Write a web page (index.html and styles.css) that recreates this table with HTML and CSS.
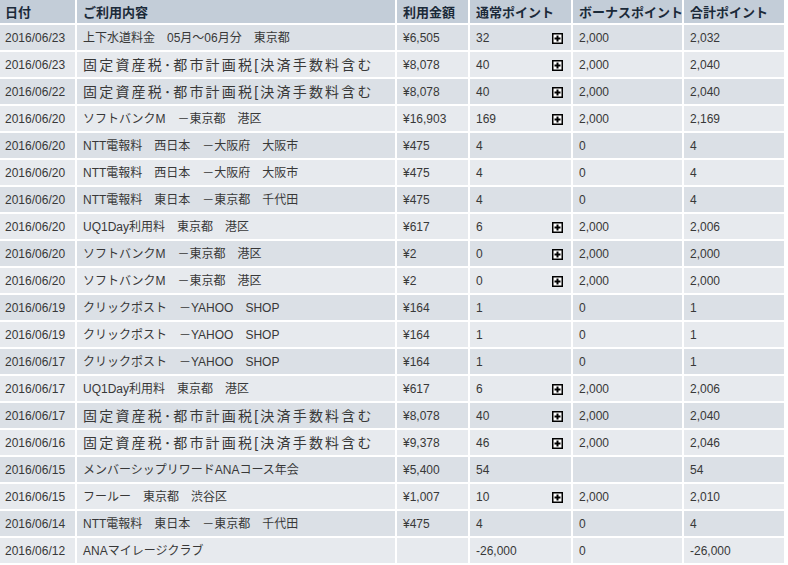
FILE: index.html
```html
<!DOCTYPE html>
<html lang="ja">
<head>
<meta charset="utf-8">
<link rel="stylesheet" href="styles.css">
</head>
<body>
<table class="pts">
<colgroup>
<col class="c-date"><col class="c-desc"><col class="c-amt"><col class="c-norm"><col class="c-bonus"><col class="c-total">
</colgroup>
<thead>
<tr><th class="first">日付</th><th>ご利用内容</th><th>利用金額</th><th>通常ポイント</th><th>ボーナスポイント</th><th>合計ポイント</th></tr>
</thead>
<tbody id="rows">
<tr><td class="first">2016/06/23</td><td>上下水道料金　05月～06月分　東京都</td><td>¥6,505</td><td><div class="np"><span>32</span><svg class="plus" viewBox="0 0 11 11" width="11" height="11"><rect x="0.75" y="0.75" width="9.5" height="9.5" fill="#fff" stroke="#000" stroke-width="1.5"/><rect x="2.5" y="4.5" width="6" height="2" fill="#000"/><rect x="4.5" y="2.5" width="2" height="6" fill="#000"/></svg></div></td><td>2,000</td><td>2,032</td></tr>
<tr><td class="first">2016/06/23</td><td class="wide">固定資産税･都市計画税[決済手数料含む</td><td>¥8,078</td><td><div class="np"><span>40</span><svg class="plus" viewBox="0 0 11 11" width="11" height="11"><rect x="0.75" y="0.75" width="9.5" height="9.5" fill="#fff" stroke="#000" stroke-width="1.5"/><rect x="2.5" y="4.5" width="6" height="2" fill="#000"/><rect x="4.5" y="2.5" width="2" height="6" fill="#000"/></svg></div></td><td>2,000</td><td>2,040</td></tr>
<tr><td class="first">2016/06/22</td><td class="wide">固定資産税･都市計画税[決済手数料含む</td><td>¥8,078</td><td><div class="np"><span>40</span><svg class="plus" viewBox="0 0 11 11" width="11" height="11"><rect x="0.75" y="0.75" width="9.5" height="9.5" fill="#fff" stroke="#000" stroke-width="1.5"/><rect x="2.5" y="4.5" width="6" height="2" fill="#000"/><rect x="4.5" y="2.5" width="2" height="6" fill="#000"/></svg></div></td><td>2,000</td><td>2,040</td></tr>
<tr><td class="first">2016/06/20</td><td>ソフトバンクM　－東京都　港区</td><td>¥16,903</td><td><div class="np"><span>169</span><svg class="plus" viewBox="0 0 11 11" width="11" height="11"><rect x="0.75" y="0.75" width="9.5" height="9.5" fill="#fff" stroke="#000" stroke-width="1.5"/><rect x="2.5" y="4.5" width="6" height="2" fill="#000"/><rect x="4.5" y="2.5" width="2" height="6" fill="#000"/></svg></div></td><td>2,000</td><td>2,169</td></tr>
<tr><td class="first">2016/06/20</td><td>NTT電報料　西日本　－大阪府　大阪市</td><td>¥475</td><td><div class="np"><span>4</span></div></td><td>0</td><td>4</td></tr>
<tr><td class="first">2016/06/20</td><td>NTT電報料　西日本　－大阪府　大阪市</td><td>¥475</td><td><div class="np"><span>4</span></div></td><td>0</td><td>4</td></tr>
<tr><td class="first">2016/06/20</td><td>NTT電報料　東日本　－東京都　千代田</td><td>¥475</td><td><div class="np"><span>4</span></div></td><td>0</td><td>4</td></tr>
<tr><td class="first">2016/06/20</td><td>UQ1Day利用料　東京都　港区</td><td>¥617</td><td><div class="np"><span>6</span><svg class="plus" viewBox="0 0 11 11" width="11" height="11"><rect x="0.75" y="0.75" width="9.5" height="9.5" fill="#fff" stroke="#000" stroke-width="1.5"/><rect x="2.5" y="4.5" width="6" height="2" fill="#000"/><rect x="4.5" y="2.5" width="2" height="6" fill="#000"/></svg></div></td><td>2,000</td><td>2,006</td></tr>
<tr><td class="first">2016/06/20</td><td>ソフトバンクM　－東京都　港区</td><td>¥2</td><td><div class="np"><span>0</span><svg class="plus" viewBox="0 0 11 11" width="11" height="11"><rect x="0.75" y="0.75" width="9.5" height="9.5" fill="#fff" stroke="#000" stroke-width="1.5"/><rect x="2.5" y="4.5" width="6" height="2" fill="#000"/><rect x="4.5" y="2.5" width="2" height="6" fill="#000"/></svg></div></td><td>2,000</td><td>2,000</td></tr>
<tr><td class="first">2016/06/20</td><td>ソフトバンクM　－東京都　港区</td><td>¥2</td><td><div class="np"><span>0</span><svg class="plus" viewBox="0 0 11 11" width="11" height="11"><rect x="0.75" y="0.75" width="9.5" height="9.5" fill="#fff" stroke="#000" stroke-width="1.5"/><rect x="2.5" y="4.5" width="6" height="2" fill="#000"/><rect x="4.5" y="2.5" width="2" height="6" fill="#000"/></svg></div></td><td>2,000</td><td>2,000</td></tr>
<tr><td class="first">2016/06/19</td><td>クリックポスト　－YAHOO　SHOP</td><td>¥164</td><td><div class="np"><span>1</span></div></td><td>0</td><td>1</td></tr>
<tr><td class="first">2016/06/19</td><td>クリックポスト　－YAHOO　SHOP</td><td>¥164</td><td><div class="np"><span>1</span></div></td><td>0</td><td>1</td></tr>
<tr><td class="first">2016/06/17</td><td>クリックポスト　－YAHOO　SHOP</td><td>¥164</td><td><div class="np"><span>1</span></div></td><td>0</td><td>1</td></tr>
<tr><td class="first">2016/06/17</td><td>UQ1Day利用料　東京都　港区</td><td>¥617</td><td><div class="np"><span>6</span><svg class="plus" viewBox="0 0 11 11" width="11" height="11"><rect x="0.75" y="0.75" width="9.5" height="9.5" fill="#fff" stroke="#000" stroke-width="1.5"/><rect x="2.5" y="4.5" width="6" height="2" fill="#000"/><rect x="4.5" y="2.5" width="2" height="6" fill="#000"/></svg></div></td><td>2,000</td><td>2,006</td></tr>
<tr><td class="first">2016/06/17</td><td class="wide">固定資産税･都市計画税[決済手数料含む</td><td>¥8,078</td><td><div class="np"><span>40</span><svg class="plus" viewBox="0 0 11 11" width="11" height="11"><rect x="0.75" y="0.75" width="9.5" height="9.5" fill="#fff" stroke="#000" stroke-width="1.5"/><rect x="2.5" y="4.5" width="6" height="2" fill="#000"/><rect x="4.5" y="2.5" width="2" height="6" fill="#000"/></svg></div></td><td>2,000</td><td>2,040</td></tr>
<tr><td class="first">2016/06/16</td><td class="wide">固定資産税･都市計画税[決済手数料含む</td><td>¥9,378</td><td><div class="np"><span>46</span><svg class="plus" viewBox="0 0 11 11" width="11" height="11"><rect x="0.75" y="0.75" width="9.5" height="9.5" fill="#fff" stroke="#000" stroke-width="1.5"/><rect x="2.5" y="4.5" width="6" height="2" fill="#000"/><rect x="4.5" y="2.5" width="2" height="6" fill="#000"/></svg></div></td><td>2,000</td><td>2,046</td></tr>
<tr><td class="first">2016/06/15</td><td>メンバーシップリワードANAコース年会</td><td>¥5,400</td><td><div class="np"><span>54</span></div></td><td></td><td>54</td></tr>
<tr><td class="first">2016/06/15</td><td>フールー　東京都　渋谷区</td><td>¥1,007</td><td><div class="np"><span>10</span><svg class="plus" viewBox="0 0 11 11" width="11" height="11"><rect x="0.75" y="0.75" width="9.5" height="9.5" fill="#fff" stroke="#000" stroke-width="1.5"/><rect x="2.5" y="4.5" width="6" height="2" fill="#000"/><rect x="4.5" y="2.5" width="2" height="6" fill="#000"/></svg></div></td><td>2,000</td><td>2,010</td></tr>
<tr><td class="first">2016/06/14</td><td>NTT電報料　東日本　－東京都　千代田</td><td>¥475</td><td><div class="np"><span>4</span></div></td><td>0</td><td>4</td></tr>
<tr><td class="first">2016/06/12</td><td>ANAマイレージクラブ</td><td></td><td><div class="np"><span>-26,000</span></div></td><td>0</td><td>-26,000</td></tr>
</tbody>
</table>
</body>
</html>
```
FILE: styles.css
```css
html, body {
  margin: 0;
  padding: 0;
  background: #fff;
}
body {
  font-family: "Liberation Sans", "Noto Sans CJK JP", sans-serif;
  font-size: 12px;
  color: #383838;
}
.pts {
  border-collapse: separate;
  border-spacing: 0;
  table-layout: fixed;
  width: 786px;
}
.c-date { width: 77px; }
.c-desc { width: 320px; }
.c-amt { width: 73px; }
.c-norm { width: 103px; }
.c-bonus { width: 111px; }
.c-total { width: 102px; }
.pts th, .pts td {
  text-align: left;
  padding: 0 4px 0 6px;
  border-right: 2px solid #fff;
  border-bottom: 2px solid #fff;
  white-space: nowrap;
  overflow: hidden;
  box-sizing: border-box;
}
.pts th.first, .pts td.first {
  padding-left: 5px;
}
.pts th {
  height: 25px;
  background: #c3cdd8;
  color: #1b2a39;
  font-weight: bold;
  font-size: 13px;
  font-family: "Noto Sans CJK JP", "Liberation Sans", sans-serif;
  line-height: 23px;
}
.pts td {
  height: 27px;
  padding-top: 2px;
  line-height: 23px;
}
.pts td.wide {
  font-size: 14px;
  letter-spacing: 2.2px;
}
.pts tbody tr:nth-child(odd) td { background: #dbe0e6; }
.pts tbody tr:nth-child(even) td { background: #e7eaee; }
.np {
  display: flex;
  align-items: center;
  justify-content: space-between;
  padding-right: 4px;
  letter-spacing: 0;
}
.plus {
  display: block;
  flex: none;
}
```
